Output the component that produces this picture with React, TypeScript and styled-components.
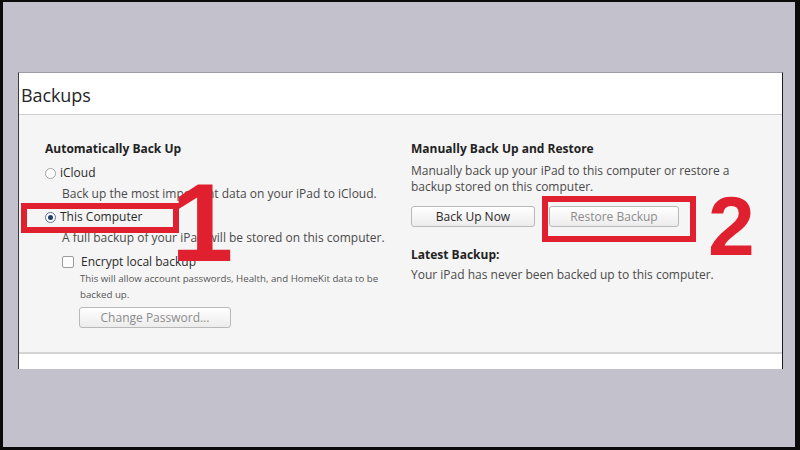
import React from "react";
import styled, { createGlobalStyle } from "styled-components";

const Global = createGlobalStyle`
  html, body { margin: 0; padding: 0; }
  body { font-family: "Open Sans", "Noto Sans", sans-serif; }
  * { box-sizing: border-box; }
`;

const Frame = styled.div`
  position: relative;
  width: 800px;
  height: 450px;
  background: #c3c1cc;
  border-style: solid;
  border-color: #0b0b0b;
  border-width: 2px 5px 3px 3px;
  padding: 70px 0 0 15px;
  overflow: hidden;
`;

const Panel = styled.section`
  width: 765px;
  height: 297px;
  display: flex;
  flex-direction: column;
  border-top: 1px solid #9c9ca4;
  border-left: 1px solid #3a3a3a;
  border-right: 1px solid #1e1e1e;
  background: #fff;
`;

const Header = styled.header`
  height: 42px;
  display: flex;
  align-items: center;
  padding: 2px 0 0 2px;
  border-bottom: 1px solid #cfcfcf;
  font-size: 18px;
  letter-spacing: -0.1px;
  color: #262626;
`;

const Body = styled.div`
  height: 239px;
  background: #f5f5f5;
  border-bottom: 2px solid #d4d4d4;
  display: grid;
  grid-template-columns: 366px 1fr;
  padding: 26px 0 0 26px;
`;

const Column = styled.div`
  display: flex;
  flex-direction: column;
  align-items: flex-start;
`;

const Heading = styled.div<{ $gap?: number }>`
  font-size: 12px;
  line-height: 16px;
  font-weight: 700;
  color: #222;
  margin-top: ${(p) => p.$gap ?? 0}px;
`;

const Text = styled.div<{ $gap?: number; $indent?: number; $w?: number }>`
  font-size: 12px;
  line-height: 16px;
  color: #4a4a4a;
  margin-top: ${(p) => p.$gap ?? 0}px;
  margin-left: ${(p) => p.$indent ?? 0}px;
  ${(p) => (p.$w ? `width: ${p.$w}px;` : "")}
`;

const Small = styled.div`
  font-size: 9.7px;
  line-height: 16px;
  color: #555;
  margin: 1px 0 0 35px;
  width: 310px;
`;

const Option = styled.label<{ $gap: number; $indent?: number }>`
  display: flex;
  align-items: center;
  gap: 4px;
  font-size: 12px;
  line-height: 16px;
  color: #2a2a2a;
  margin-top: ${(p) => p.$gap}px;
  margin-left: ${(p) => p.$indent ?? 0}px;
`;

const Radio = styled.span<{ $on?: boolean }>`
  width: 11px;
  height: 11px;
  border-radius: 50%;
  border: 1px solid ${(p) => (p.$on ? "#5a6f8c" : "#a2a2a2")};
  background: #fff;
  display: flex;
  align-items: center;
  justify-content: center;
  &::after {
    content: "";
    width: 5px;
    height: 5px;
    border-radius: 50%;
    background: ${(p) => (p.$on ? "#1f3f6e" : "transparent")};
  }
`;

const Check = styled.span`
  width: 12px;
  height: 12px;
  border: 1px solid #9e9e9e;
  border-radius: 2px;
  background: #fcfcfc;
  margin-right: 3px;
`;

const ButtonRow = styled.div`
  display: flex;
  gap: 14px;
  margin-top: 11px;
`;

const Button = styled.button<{ $w: number; $dim?: boolean; $gap?: number; $indent?: number }>`
  width: ${(p) => p.$w}px;
  height: 21px;
  padding: 0;
  font-family: inherit;
  font-size: 12px;
  color: ${(p) => (p.$dim ? "#8c8c8c" : "#2a2a2a")};
  background: linear-gradient(#ffffff, #ececec);
  border: 1px solid #b9b9b9;
  border-radius: 3px;
  margin-top: ${(p) => p.$gap ?? 0}px;
  margin-left: ${(p) => p.$indent ?? 0}px;
`;

const Footer = styled.div`
  flex: 1;
  background: #fff;
`;

const RedBox = styled.div<{ $x: number; $y: number; $w: number; $h: number }>`
  position: absolute;
  left: ${(p) => p.$x}px;
  top: ${(p) => p.$y}px;
  width: ${(p) => p.$w}px;
  height: ${(p) => p.$h}px;
  border: 6px solid #e1202f;
`;

const Digit = styled.div<{ $x: number; $y: number; $size: number }>`
  position: absolute;
  left: ${(p) => p.$x}px;
  top: ${(p) => p.$y}px;
  font-family: "Liberation Sans", Arial, sans-serif;
  font-weight: 700;
  font-size: ${(p) => p.$size}px;
  line-height: 1;
  color: #e1202f;
`;

export default function App() {
  return (
    <>
      <Global />
      <Frame>
        <Panel>
          <Header>Backups</Header>
          <Body>
            <Column>
              <Heading>Automatically Back Up</Heading>
              <Option $gap={8}>
                <Radio />
                iCloud
              </Option>
              <Text $gap={5} $indent={17}>
                Back up the most important data on your iPad to iCloud.
              </Text>
              <Option $gap={7}>
                <Radio $on />
                This Computer
              </Option>
              <Text $gap={5} $indent={17}>
                A full backup of your iPad will be stored on this computer.
              </Text>
              <Option $gap={8} $indent={17}>
                <Check />
                Encrypt local backup
              </Option>
              <Small>
                This will allow account passwords, Health, and HomeKit data to be backed up.
              </Small>
              <Button $w={152} $dim $gap={4} $indent={34}>
                Change Password...
              </Button>
            </Column>
            <Column>
              <Heading>Manually Back Up and Restore</Heading>
              <Text $gap={6} $w={340}>
                Manually back up your iPad to this computer or restore a backup stored on this
                computer.
              </Text>
              <ButtonRow>
                <Button $w={124}>Back Up Now</Button>
                <Button $w={130} $dim>
                  Restore Backup
                </Button>
              </ButtonRow>
              <Heading $gap={20}>Latest Backup:</Heading>
              <Text $gap={4}>Your iPad has never been backed up to this computer.</Text>
            </Column>
          </Body>
          <Footer />
        </Panel>
        <RedBox $x={18} $y={201} $w={158} $h={30} />
        <RedBox $x={539} $y={194} $w={154} $h={46} />
        <Digit $x={168} $y={165} $size={112}>
          1
        </Digit>
        <Digit $x={705} $y={182} $size={84}>
          2
        </Digit>
      </Frame>
    </>
  );
}
